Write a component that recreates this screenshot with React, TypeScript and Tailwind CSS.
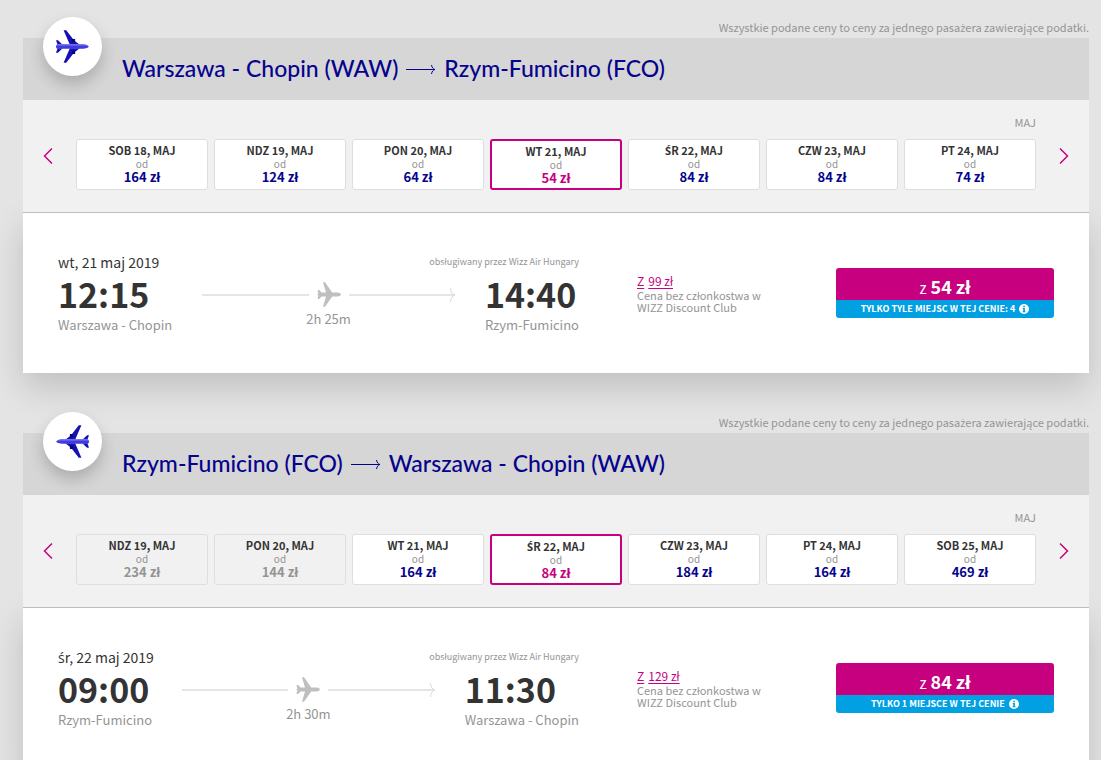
type Fare = {
  day: string;
  price: string;
  disabled?: boolean;
};

type Flight = {
  from: string;
  fromCode: string;
  to: string;
  toCode: string;
  returning?: boolean;
  fares: Fare[];
  selected: number;
  date: string;
  departure: string;
  arrival: string;
  duration: string;
  regularPrice: string;
  price: string;
  seats: string;
};

const flights: Flight[] = [
  {
    from: "Warszawa - Chopin",
    fromCode: "WAW",
    to: "Rzym-Fumicino",
    toCode: "FCO",
    fares: [
      { day: "SOB 18, MAJ", price: "164 zł" },
      { day: "NDZ 19, MAJ", price: "124 zł" },
      { day: "PON 20, MAJ", price: "64 zł" },
      { day: "WT 21, MAJ", price: "54 zł" },
      { day: "ŚR 22, MAJ", price: "84 zł" },
      { day: "CZW 23, MAJ", price: "84 zł" },
      { day: "PT 24, MAJ", price: "74 zł" },
    ],
    selected: 3,
    date: "wt, 21 maj 2019",
    departure: "12:15",
    arrival: "14:40",
    duration: "2h 25m",
    regularPrice: "99 zł",
    price: "54 zł",
    seats: "TYLKO TYLE MIEJSC W TEJ CENIE: 4",
  },
  {
    from: "Rzym-Fumicino",
    fromCode: "FCO",
    to: "Warszawa - Chopin",
    toCode: "WAW",
    returning: true,
    fares: [
      { day: "NDZ 19, MAJ", price: "234 zł", disabled: true },
      { day: "PON 20, MAJ", price: "144 zł", disabled: true },
      { day: "WT 21, MAJ", price: "164 zł" },
      { day: "ŚR 22, MAJ", price: "84 zł" },
      { day: "CZW 23, MAJ", price: "184 zł" },
      { day: "PT 24, MAJ", price: "164 zł" },
      { day: "SOB 25, MAJ", price: "469 zł" },
    ],
    selected: 3,
    date: "śr, 22 maj 2019",
    departure: "09:00",
    arrival: "11:30",
    duration: "2h 30m",
    regularPrice: "129 zł",
    price: "84 zł",
    seats: "TYLKO 1 MIEJSCE W TEJ CENIE",
  },
];

function Polish({ text }: { text: string }) {
  return text.split(/([śŚż])/).map((part, i) =>
    i % 2 === 1 ? (
      <span key={i} className="font-['Open_Sans',sans-serif] leading-none">
        {part}
      </span>
    ) : (
      part
    ),
  );
}

function RoutePlane({ flipped }: { flipped?: boolean }) {
  return (
    <svg viewBox="0 0 100 100" className={flipped ? "size-[33px] -scale-x-100" : "size-[33px]"} aria-hidden="true">
      <g fill="#1410b4">
        <path d="M23 1h8l24 31 17 13H42z" />
        <path d="M23 99h8l24-31 17-13H42z" />
        <path d="M0 31h6l14 14H5z" />
        <path d="M0 69h6l14-14H5z" />
      </g>
      <path d="M47 27h11v11H50zM47 73h11V62H50z" fill="#0a0878" />
      <path d="M0 50c0-4 2-7 7-7h72c11 0 20 4 20 7s-9 7-20 7H7c-5 0-7-3-7-7z" fill="#3f3bdc" />
      <path d="M3 45c1-1 2-2 4-2h72c8 0 14 2 17 4H3z" fill="#7f7cf5" />
    </svg>
  );
}

function GrayPlane() {
  return (
    <svg viewBox="0 0 24 25" className="h-[25px] w-6 shrink-0" fill="#bfbfbf" aria-hidden="true">
      <path d="M6 .2h2l7.200 10.400h5.300c2 0 3.400.9 3.400 1.900s-1.400 1.900-3.400 1.900h-5.300L8 24.800H6l3-10.400H4.600L2.200 16.900H.5l.9-3.600L0 12.500l1.400-.8L.5 8.100h1.700l2.400 2.500H9z" />
    </svg>
  );
}

function Chevron({ left }: { left?: boolean }) {
  return (
    <svg viewBox="0 0 10 18" className="h-[18px] w-[10px]" fill="none" stroke="#c6007e" strokeWidth="1.5" aria-hidden="true">
      <path d={left ? "M9 1.500 1.500 9 9 16.500" : "M1 1.500 8.500 9 1 16.500"} />
    </svg>
  );
}

function RouteHeader({ flight }: { flight: Flight }) {
  return (
    <header className="relative z-10 flex h-[62px] items-center bg-[#d6d6d6] pb-[2px] pl-[99px]">
      <div className="absolute -top-[21px] left-5 flex size-[59px] items-center justify-center rounded-full bg-white shadow-[0_8px_16px_rgba(0,0,0,0.2)]">
        <RoutePlane flipped={flight.returning} />
      </div>
      <h2 className="flex items-center gap-2 font-['Lato',sans-serif] text-[23px] leading-7 font-medium text-[#06038d]">
        <span>
          {flight.from} ({flight.fromCode})
        </span>
        <svg viewBox="0 0 30 12" className="mt-1 h-3 w-[30px]" fill="none" stroke="#06038d" aria-hidden="true">
          <path d="M0 5.500h29M25.500 1c.5 2.500 1.500 4 3.500 4.500-2 .5-3 2-3.500 4.500" />
        </svg>
        <span>
          {flight.to} ({flight.toCode})
        </span>
      </h2>
    </header>
  );
}

function FareCard({ fare, selected }: { fare: Fare; selected: boolean }) {
  let box = "border border-[#dedede] bg-white";
  let price = "text-[#06038d]";
  if (selected) {
    box = "border-2 border-[#c6007e] bg-white";
    price = "text-[#c6007e]";
  } else if (fare.disabled) {
    box = "border border-[#dedede]";
    price = "text-[#949494]";
  }
  return (
    <button type="button" disabled={fare.disabled} className={`flex h-[51px] flex-col items-center rounded-[3px] pt-[3px] ${box}`}>
      <span className="text-[11px] leading-[15px] font-bold text-[#333]">
        <Polish text={fare.day} />
      </span>
      <span className="text-[10px] leading-[11px] text-[#949494]">od</span>
      <span className={`text-[13px] leading-[15px] font-bold ${price}`}>{fare.price}</span>
    </button>
  );
}

function FareStrip({ flight }: { flight: Flight }) {
  return (
    <div className="relative z-10 border-b border-[#bdbdbd] bg-[#f1f1f1] pt-[15px] pb-[22px]">
      <p className="px-[53px] text-right text-[11px] leading-[14px] text-[#949494]">MAJ</p>
      <div className="mt-[10px] flex items-center">
        <button type="button" aria-label="Wcześniejsze dni" className="flex w-[53px] justify-center pr-1 pb-[18px]">
          <Chevron left />
        </button>
        <div className="grid flex-1 grid-cols-7 gap-[6px]">
          {flight.fares.map((fare, i) => (
            <FareCard key={fare.day} fare={fare} selected={i === flight.selected} />
          ))}
        </div>
        <button type="button" aria-label="Późniejsze dni" className="flex w-[53px] justify-center pb-[18px] pl-[2px]">
          <Chevron />
        </button>
      </div>
    </div>
  );
}

function FlightTimes({ flight }: { flight: Flight }) {
  return (
    <div className="flex-1">
      <div className="flex items-center justify-between">
        <p className="text-[14px] leading-5 text-[#333]">
          <Polish text={flight.date} />
        </p>
        <p className="text-[9px] leading-5 text-[#949494]">obsługiwany przez Wizz Air Hungary</p>
      </div>
      <div className="flex justify-between gap-[30px]">
        <div>
          <p className="text-[34px] leading-[44px] font-bold text-[#333]">{flight.departure}</p>
          <p className="text-[13px] leading-[18px] text-[#949494]">{flight.from}</p>
        </div>
        <div className="flex flex-1 flex-col items-center pt-[10px]">
          <div className="flex w-full items-center gap-2">
            <div className="h-[2px] flex-1 bg-[#e5e5e5]" />
            <GrayPlane />
            <div className="relative h-[2px] flex-1 bg-[#e5e5e5]">
              <svg viewBox="0 0 6 14" className="absolute -top-[6px] right-0 h-[14px] w-[6px]" fill="none" stroke="#d9d9d9" aria-hidden="true">
                <path d="M1.500 0c.3 3.500 1.500 6 4 7-2.500 1-3.700 3.500-4 7" />
              </svg>
            </div>
          </div>
          <p className="text-[13px] leading-6 text-[#949494]">{flight.duration}</p>
        </div>
        <div>
          <p className="text-[34px] leading-[44px] font-bold text-[#333]">{flight.arrival}</p>
          <p className="text-[13px] leading-[18px] text-[#949494]">{flight.to}</p>
        </div>
      </div>
    </div>
  );
}

function FlightRow({ flight }: { flight: Flight }) {
  return (
    <div className="flex h-40 items-start bg-white px-[35px] pt-[39px] shadow-[0_14px_32px_rgba(0,0,0,0.16)]">
      <FlightTimes flight={flight} />
      <div className="ml-[58px] w-[199px] pt-[21px]">
        <a href="#" className="flex gap-1 text-[12px] leading-4 text-[#c6007e]">
          <span className="underline underline-offset-2">Z</span>
          <span className="underline underline-offset-2">{flight.regularPrice}</span>
        </a>
        <p className="w-[130px] text-[11px] leading-3 text-[#949494]">Cena bez członkostwa w WIZZ Discount Club</p>
      </div>
      <button type="button" className="mt-4 w-[218px] overflow-hidden rounded-[3px] text-white">
        <span className="flex h-8 items-baseline justify-center gap-1 bg-[#c6007e] pt-[6px]">
          <span className="text-[15px] leading-6">z</span>
          <span className="text-[18px] leading-6 font-bold">{flight.price}</span>
        </span>
        <span className="flex h-[18px] items-center justify-center gap-1 bg-[#00a0e3] text-[9px] leading-3 font-bold">
          {flight.seats}
          <svg viewBox="0 0 10 10" className="size-[10px]" aria-hidden="true">
            <circle cx="5" cy="5" r="5" fill="#fff" />
            <path d="M4.200 1.700h1.700v1.500H4.200zM3.700 4h2.200v3.200h.6v1H3.600v-1h.6V5h-.5z" fill="#00a0e3" />
          </svg>
        </span>
      </button>
    </div>
  );
}

export default function App() {
  return (
    <main className="flex min-h-screen flex-col gap-[22px] overflow-hidden bg-[#e4e4e4] pr-3 pl-[23px] font-['Noto_Sans_CJK_SC','Open_Sans',sans-serif]">
      {flights.map((flight) => (
        <section key={flight.fromCode}>
          <p className="relative z-10 pt-[17px] pb-px text-right text-[11px] leading-5 text-[#949494]">
            <Polish text="Wszystkie podane ceny to ceny za jednego pasażera zawierające podatki." />
          </p>
          <RouteHeader flight={flight} />
          <FareStrip flight={flight} />
          <FlightRow flight={flight} />
        </section>
      ))}
    </main>
  );
}
